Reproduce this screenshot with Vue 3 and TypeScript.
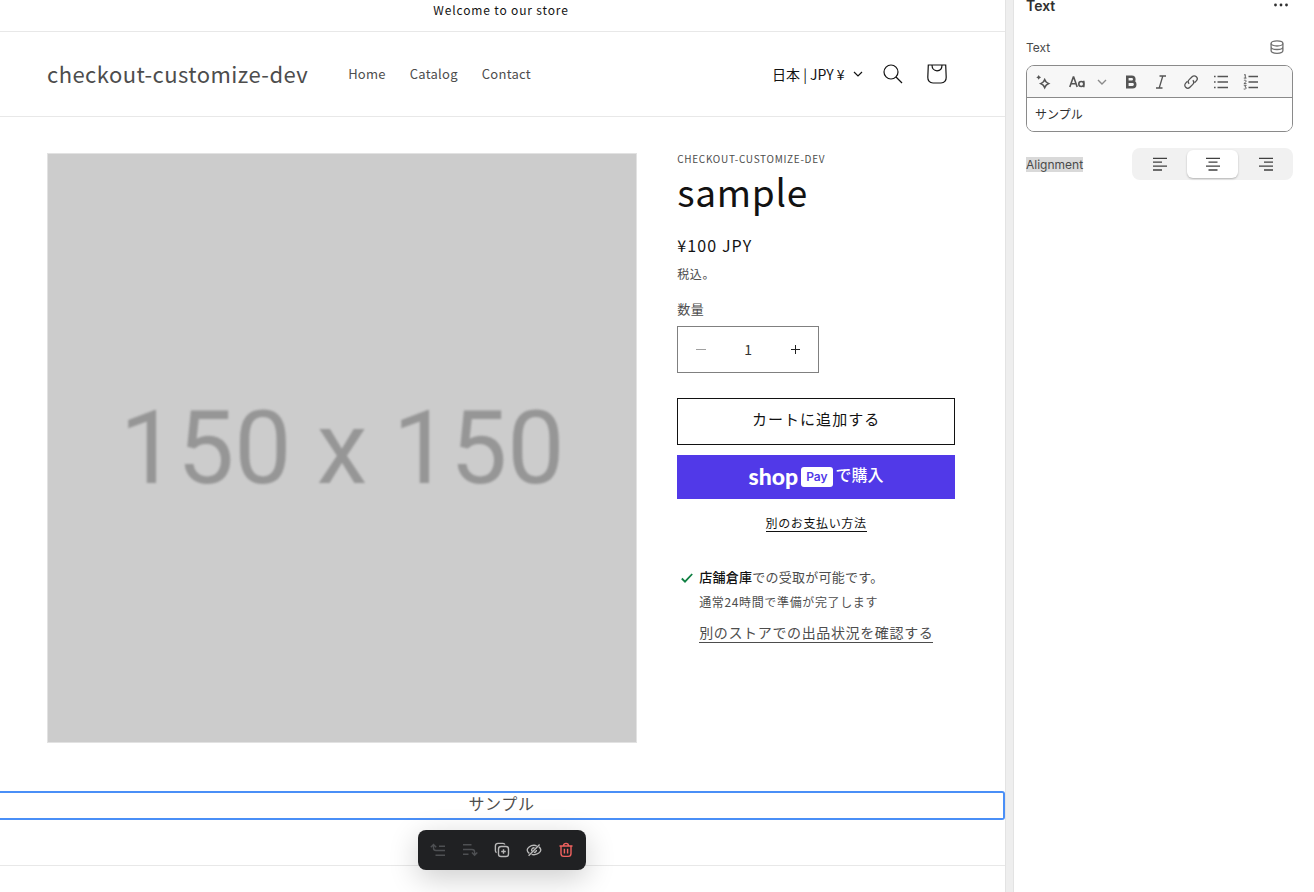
<script setup lang="ts">
import { ref } from 'vue'

type Align = 'left' | 'center' | 'right'

interface AlignOption {
  value: Align
  label: string
  path: string
}

const navLinks: string[] = ['Home', 'Catalog', 'Contact']
const quantity = ref<string>('1')
const content = ref<string>('サンプル')
const alignment = ref<Align>('center')

const alignOptions: AlignOption[] = [
  { value: 'left', label: 'Left', path: 'M1 2.300h14M1 6.200h9M1 10.100h14M1 14h9' },
  { value: 'center', label: 'Center', path: 'M1 2.300h14M3.500 6.200h9M1 10.100h14M3.500 14h9' },
  { value: 'right', label: 'Right', path: 'M1 2.300h14M6 6.200h9M1 10.100h14M6 14h9' },
]
</script>

<template>
  <div class="editor">
    <main class="preview">
      <p class="announcement">Welcome to our store</p>

      <header class="header">
        <a class="logo" href="#">checkout-customize-dev</a>
        <nav class="nav">
          <a v-for="link in navLinks" :key="link" href="#">{{ link }}</a>
        </nav>
        <div class="country">
          <select aria-label="国/地域">
            <option>日本 | JPY ¥</option>
          </select>
          <svg width="10" height="6" viewBox="0 0 10 6" fill="none" stroke="#121212" stroke-width="1.2">
            <path d="M1 1l4 4 4-4" />
          </svg>
        </div>
        <button class="header-icon" aria-label="検索">
          <svg width="20" height="20" viewBox="0 0 20 20" fill="none" stroke="#121212" stroke-width="1.2">
            <circle cx="8" cy="8" r="7" />
            <path d="M13 13l6 6" />
          </svg>
        </button>
        <button class="header-icon" aria-label="カート">
          <svg width="20" height="20" viewBox="0 0 20 20" fill="none" stroke="#121212" stroke-width="1.2">
            <path d="M1.300 1h17.400l.5 12.200c.1 3.600-1.900 5.800-5.200 5.800H6c-3.300 0-5.300-2.200-5.200-5.800z" />
            <path d="M5 1c0 3.500 2 5.800 5 5.800S15 4.500 15 1" />
          </svg>
        </button>
      </header>

      <section class="product">
        <div class="media">
          <svg viewBox="0 0 150 150" role="img" aria-label="150 x 150">
            <rect width="150" height="150" fill="#ccc" />
            <text x="75" y="84" text-anchor="middle">150 x 150</text>
          </svg>
        </div>
        <div class="info">
          <p class="vendor">CHECKOUT-CUSTOMIZE-DEV</p>
          <h1>sample</h1>
          <p class="price">¥100 JPY</p>
          <p class="tax">税込。</p>
          <label class="qty-label" for="quantity">数量</label>
          <div class="quantity">
            <button aria-label="数量を減らす" disabled>
              <svg width="10" height="10" viewBox="0 0 10 10" stroke="#a0a0a0"><path d="M0 4.500h10" /></svg>
            </button>
            <input id="quantity" v-model="quantity" type="text" inputmode="numeric" />
            <button aria-label="数量を増やす">
              <svg width="10" height="10" viewBox="0 0 10 10" stroke="#222"><path d="M1 4.500h9M5.500 0v9" /></svg>
            </button>
          </div>
          <button class="add">カートに追加する</button>
          <button class="shop-pay">
            <span class="shop-word">shop</span>
            <span class="pay-badge">Pay</span>
            <span class="buy">で購入</span>
          </button>
          <a class="more-payment" href="#">別のお支払い方法</a>
          <div class="pickup">
            <svg width="12" height="12" viewBox="0 0 12 12" fill="none" stroke="#108043" stroke-width="1.800">
              <path d="M.8 6.500l3.200 3.200L11.200 2" />
            </svg>
            <div class="pickup-text">
              <p class="pickup-main"><strong>店舗倉庫</strong>での受取が可能です。</p>
              <p class="pickup-time">通常24時間で準備が完了します</p>
              <a class="stores" href="#">別のストアでの出品状況を確認する</a>
            </div>
          </div>
        </div>
      </section>

      <section class="text-block">
        <p>{{ content }}</p>
        <div class="block-actions">
          <button aria-label="Move up" disabled>
            <svg width="16" height="16" viewBox="0 0 16 16">
              <path d="M.8 5.200L3.500 2.500l2.700 2.700M3.500 2.800v3.200c0 1.600.9 2.500 2.500 2.500h9M9 4.200h6M5.500 13.200H15" />
            </svg>
          </button>
          <button aria-label="Move down" disabled>
            <svg width="16" height="16" viewBox="0 0 16 16">
              <path d="M1 2.800h8.500M1 7.500h9c1.600 0 2.600.9 2.600 2.500v3M1 12.200h5.500M9.900 10.500l2.700 2.700 2.700-2.700" />
            </svg>
          </button>
          <button aria-label="Duplicate">
            <svg width="16" height="16" viewBox="0 0 16 16">
              <path d="M2.600 10.700C1.800 10.400 1.400 9.700 1.400 8.800V4c0-1.600 1-2.600 2.600-2.600h5c.9 0 1.600.4 1.900 1.200" />
              <rect x="4.500" y="4.500" width="10" height="10" rx="2.600" />
              <path d="M9.500 7.200v4.600M7.200 9.500h4.600" />
            </svg>
          </button>
          <button aria-label="Hide">
            <svg width="16" height="16" viewBox="0 0 16 16">
              <path d="M3.300 11.400C2 10.400 1.200 9.100 1.200 8c0-1.900 2.900-4.700 6.800-4.700 1 0 1.900.2 2.700.5M12.900 4.900c1.200 1 1.900 2.100 1.900 3.100 0 1.900-2.900 4.700-6.800 4.700-.9 0-1.700-.1-2.400-.4M2.600 13.800L13.600 2.400M5.700 9.200C5.200 7.200 6.600 5.600 8.500 5.700M7.800 10.400c1.500.1 2.600-1 2.600-2.500" />
            </svg>
          </button>
          <button class="danger" aria-label="Delete">
            <svg width="16" height="16" viewBox="0 0 16 16">
              <path d="M1.500 4h13M5.500 4c0-1.600 1-2.600 2.500-2.600s2.500 1 2.500 2.600M3 4v7.500c0 1.900 1 2.900 2.800 2.900h4.400c1.800 0 2.800-1 2.800-2.900V4M6.400 6.800v4.700M9.600 6.800v4.700" />
            </svg>
          </button>
        </div>
      </section>
      <footer class="footer"></footer>
    </main>

    <div class="gutter"></div>

    <aside class="panel">
      <div class="panel-head">
        <h2>Text</h2>
        <button class="more" aria-label="More actions">
          <svg width="16" height="16" viewBox="0 0 16 16" fill="#303030">
            <circle cx="2.500" cy="8" r="1.400" /><circle cx="8" cy="8" r="1.400" /><circle cx="13.500" cy="8" r="1.400" />
          </svg>
        </button>
      </div>
      <div class="field-head">
        <label for="content">Text</label>
        <button class="source" aria-label="Connect dynamic source">
          <svg class="line" width="16" height="16" viewBox="0 0 16 16">
            <ellipse cx="8" cy="4.400" rx="5.900" ry="2.600" />
            <path d="M2.100 4.400v7.200c0 1.500 2.500 2.700 5.900 2.700s5.900-1.200 5.900-2.700V4.400M2.100 8c0 1.400 2.500 2.500 5.900 2.500s5.900-1.100 5.900-2.500" />
          </svg>
        </button>
      </div>
      <div class="rte">
        <div class="rte-bar">
          <button aria-label="Generate text">
            <svg class="line heavy" width="16" height="16" viewBox="0 0 16 16">
              <path d="M8.700 5.600c.5 1 .9 1.700 1.500 2.400.8.700 1.500 1.100 2.500 1.600-1 .5-1.700.9-2.500 1.600-.6.700-1 1.400-1.500 2.400-.5-1-.9-1.700-1.500-2.400-.8-.7-1.500-1.100-2.500-1.600 1-.5 1.700-.9 2.500-1.600.6-.7 1-1.400 1.500-2.400z" />
              <path class="solid" d="M2.700.900l.9 1.500 1.500.9-1.500.9-.9 1.500-.9-1.500-1.500-.9 1.500-.9z" />
            </svg>
          </button>
          <button class="format" aria-label="Format">
            <svg class="line heavy" width="16" height="14" viewBox="0 0 16 14">
              <path d="M.8 12L4.300 2h.4l3.500 10M2.100 8.800h4.800M14.800 5.800V12.200" />
              <circle cx="12.300" cy="9" r="2.500" />
            </svg>
            <svg class="chevron" width="10" height="6" viewBox="0 0 10 6"><path d="M1 1l4 4 4-4" /></svg>
          </button>
          <button aria-label="Bold">
            <svg class="line bold" width="16" height="16" viewBox="0 0 16 16">
              <path d="M4.300 2.800h4.500a2.500 2.500 0 010 5H4.300zM4.300 7.800h5.200a2.700 2.700 0 010 5.400H4.300z" />
            </svg>
          </button>
          <button aria-label="Italic">
            <svg class="line" width="16" height="16" viewBox="0 0 16 16">
              <path d="M6.500 2h6.500M3 14h6.500M9.800 2L6.200 14" />
            </svg>
          </button>
          <button aria-label="Link">
            <svg class="line" width="16" height="16" viewBox="0 0 16 16">
              <path d="M6.200 9.800c-1.200-1.200-1.200-3 0-4.200l2.900-2.900c1.200-1.200 3-1.200 4.200 0s1.200 3 0 4.200l-1.800 1.800" />
              <path d="M9.800 6.200c1.200 1.200 1.200 3 0 4.200l-2.900 2.900c-1.200 1.200-3 1.200-4.200 0s-1.200-3 0-4.200l1.800-1.800" />
            </svg>
          </button>
          <button aria-label="Bulleted list">
            <svg class="line" width="16" height="16" viewBox="0 0 16 16">
              <path d="M4.500 2.500H15M4.500 8H15M4.500 13.500H15M1 2.500h1.600M1 8h1.600M1 13.500h1.600" />
            </svg>
          </button>
          <button aria-label="Numbered list">
            <svg class="line" width="16" height="16" viewBox="0 0 16 16">
              <path d="M5.500 2.500H15M5.500 8H15M5.500 13.500H15" />
              <path class="thin" d="M1 1l1.300-.5v3.600M.8 4.100h2.700M.9 6.500c1.500-.9 2.900.1 1.900 1.400L.9 9.600h2.600M.8 11.300h2.400l-1.300 1.700c2.200 0 1.700 2.700-1.200 2" />
            </svg>
          </button>
        </div>
        <textarea id="content" v-model="content" rows="1"></textarea>
      </div>
      <div class="align-row">
        <span id="align-label"><mark>Alignment</mark></span>
        <div class="segmented" role="radiogroup" aria-labelledby="align-label">
          <label v-for="option in alignOptions" :key="option.value" :class="{ selected: alignment === option.value }">
            <input v-model="alignment" type="radio" name="alignment" :value="option.value" :aria-label="option.label" />
            <svg class="line dark" width="16" height="16" viewBox="0 0 16 16"><path :d="option.path" /></svg>
          </label>
        </div>
      </div>
    </aside>
  </div>
</template>

<style>
body {
  margin: 0;
  background: #fff;
}
</style>

<style scoped>
* {
  box-sizing: border-box;
}
p,
h1,
h2 {
  margin: 0;
}
button {
  display: flex;
  align-items: center;
  justify-content: center;
  margin: 0;
  padding: 0;
  border: 0;
  background: none;
  font: inherit;
  color: inherit;
}
a {
  color: inherit;
  text-decoration: none;
}
svg {
  flex: none;
}
.editor {
  display: flex;
  min-height: 100vh;
}
.preview {
  display: flex;
  flex: 1;
  flex-direction: column;
  min-width: 0;
  font-family: 'Noto Sans CJK JP', sans-serif;
  letter-spacing: 0.04em;
  color: #4d4d4d;
}
.announcement {
  height: 32px;
  padding-right: 3px;
  border-bottom: 1px solid #e8e8e8;
  font-size: 12px;
  line-height: 20px;
  letter-spacing: 0.07em;
  text-align: center;
  color: #121212;
}
.header {
  display: flex;
  align-items: center;
  height: 85px;
  padding: 0 46px 0 47px;
  border-bottom: 1px solid #e8e8e8;
}
.logo {
  padding-bottom: 2px;
  font-size: 22px;
  line-height: 32px;
  letter-spacing: 0.02em;
}
.nav {
  display: flex;
  gap: 24px;
  margin-left: 40px;
  font-size: 13px;
  line-height: 20px;
  letter-spacing: 0.02em;
}
.country {
  display: flex;
  align-items: center;
  gap: 8px;
  margin-left: auto;
  padding-right: 8px;
}
.country select {
  appearance: none;
  padding: 0;
  border: 0;
  background: none;
  font: inherit;
  font-size: 14px;
  line-height: 20px;
  color: #121212;
}
.header-icon {
  width: 44px;
  height: 44px;
}
.product {
  display: grid;
  grid-template-columns: 65fr 35fr;
  align-items: start;
  padding: 36px 50px 48px 47px;
}
.media {
  border: 1px solid #e2e2e2;
}
.media svg {
  display: block;
  width: 100%;
}
.media text {
  font-family: Roboto, sans-serif;
  font-size: 26px;
  letter-spacing: 0;
  fill: #969696;
  filter: blur(0.3px);
}
.info {
  display: flex;
  flex-direction: column;
  padding-left: 40px;
}
.vendor {
  font-size: 10px;
  line-height: 11px;
  letter-spacing: 0.07em;
}
h1 {
  font-size: 37px;
  font-weight: 400;
  line-height: 54px;
  letter-spacing: 0.02em;
  color: #121212;
}
.price {
  margin-top: 15px;
  font-size: 16px;
  line-height: 24px;
  letter-spacing: 0.07em;
  color: #121212;
}
.tax {
  margin-top: 7px;
  font-size: 12px;
  line-height: 20px;
}
.qty-label {
  margin-top: 15px;
  font-size: 13px;
  line-height: 20px;
}
.quantity {
  display: flex;
  width: 142px;
  height: 47px;
  margin-top: 7px;
  border: 1px solid #808080;
}
.quantity button {
  width: 46px;
}
.quantity input {
  flex: 1;
  min-width: 0;
  padding: 0 0 2px;
  border: 0;
  background: none;
  font: inherit;
  font-size: 14px;
  text-align: center;
  color: #333;
}
.add {
  height: 47px;
  margin-top: 25px;
  padding-bottom: 6px;
  border: 1px solid #121212;
  font-size: 15px;
  letter-spacing: 0.07em;
  color: #121212;
}
.shop-pay {
  gap: 3px;
  height: 44px;
  margin-top: 10px;
  padding-bottom: 2px;
  background: #5139e8;
  font-size: 16px;
  font-weight: 500;
  letter-spacing: 0;
  color: #fff;
}
.shop-word {
  font-family: Lato, sans-serif;
  font-size: 23px;
  font-weight: 900;
  line-height: 24px;
}
.pay-badge {
  height: 20px;
  margin-top: 2px;
  padding: 0 5px;
  border-radius: 3px;
  background: #fff;
  font-family: Inter, sans-serif;
  font-size: 12px;
  font-weight: 600;
  line-height: 20px;
  color: #5139e8;
}
.buy {
  padding-bottom: 4px;
}
.more-payment {
  align-self: center;
  margin-top: 15px;
  border-bottom: 1px solid #121212;
  font-size: 12px;
  line-height: 17px;
  color: #121212;
}
.pickup {
  display: flex;
  gap: 6px;
  margin-top: 35px;
  padding-left: 4px;
}
.pickup svg {
  margin-top: 5px;
}
.pickup-text {
  white-space: nowrap;
}
.pickup-main {
  font-size: 13px;
  line-height: 20px;
  letter-spacing: 0.02em;
}
.pickup-main strong {
  font-weight: 500;
  color: #121212;
}
.pickup-time {
  margin-top: 6px;
  font-size: 12px;
  line-height: 18px;
}
.stores {
  display: inline-block;
  margin-top: 12px;
  border-bottom: 1px solid #4d4d4d;
  font-size: 14px;
  line-height: 19px;
}
.text-block {
  position: relative;
  height: 29px;
  border: 2px solid #4a8ff7;
  border-left: 0;
  border-radius: 0 3px 3px 0;
}
.text-block p {
  font-size: 16px;
  line-height: 20px;
  text-align: center;
}
.block-actions {
  position: absolute;
  top: calc(100% + 12px);
  left: 50%;
  z-index: 1;
  display: flex;
  align-items: center;
  padding: 4px;
  border-radius: 8px;
  background: #202123;
  box-shadow: 0 8px 30px rgba(0, 0, 0, 0.2);
  transform: translateX(-50%);
}
.block-actions button {
  width: 32px;
  height: 32px;
  color: #b8b8b8;
}
.block-actions button:disabled {
  color: #4e5053;
}
.block-actions button.danger {
  color: #f0625f;
}
.block-actions svg {
  fill: none;
  stroke: currentColor;
  stroke-width: 1.4;
}
.footer {
  margin-top: 45px;
  border-top: 1px solid #e8e8e8;
}
.gutter {
  width: 9px;
  border: solid #e3e3e3;
  border-width: 0 1px;
  background: #eee;
}
.panel {
  width: 300px;
  padding: 0 21px 0 12px;
  font-family: Inter, 'Noto Sans CJK JP', sans-serif;
  font-size: 12px;
  color: #4a4a4a;
}
.panel-head {
  display: flex;
  align-items: center;
  justify-content: space-between;
  height: 10px;
}
.panel-head h2 {
  font-size: 14px;
  font-weight: 600;
  color: #303030;
}
.more {
  width: 24px;
}
.field-head {
  display: flex;
  align-items: center;
  justify-content: space-between;
  height: 32px;
  margin-top: 21px;
}
.source {
  width: 32px;
  height: 32px;
}
.line {
  fill: none;
  stroke: #555;
  stroke-width: 1.3;
}
.line.heavy {
  stroke-width: 1.6;
}
.line.dark {
  stroke: #404040;
}
.line.bold {
  stroke-width: 2.6;
}
.line .solid {
  fill: #555;
  stroke: none;
}
.line .thin {
  stroke-width: 0.9;
}
.source .line {
  stroke: #707070;
}
.chevron {
  fill: none;
  stroke: #8a8a8a;
  stroke-width: 1.4;
}
.rte {
  overflow: hidden;
  margin-top: 2px;
  border: 1px solid #8a8a8a;
  border-radius: 8px;
}
.rte-bar {
  display: flex;
  height: 32px;
  padding-left: 2px;
  border-bottom: 1px solid #8a8a8a;
  background: #f7f7f7;
}
.rte-bar button {
  width: 30px;
}
.rte-bar .format {
  gap: 12px;
  width: 57px;
}
.rte textarea {
  display: block;
  width: 100%;
  height: 33px;
  padding: 7px 8px 5px;
  border: 0;
  outline: 0;
  resize: none;
  background: #fff;
  font: inherit;
  line-height: 20px;
  color: #303030;
}
.align-row {
  display: flex;
  align-items: center;
  justify-content: space-between;
  margin-top: 16px;
}
mark {
  background: #d9d9d9;
  color: inherit;
}
.segmented {
  display: flex;
  gap: 2px;
  width: 161px;
  height: 32px;
  padding: 2px;
  border-radius: 8px;
  background: #f1f1f1;
}
.segmented label {
  position: relative;
  display: flex;
  flex: 1;
  align-items: center;
  justify-content: center;
  border-radius: 6px;
}
.segmented label.selected {
  background: #fff;
  box-shadow: 0 1px 2px rgba(0, 0, 0, 0.25);
}
.segmented input {
  position: absolute;
  inset: 0;
  width: 100%;
  height: 100%;
  margin: 0;
  opacity: 0;
}
</style>
